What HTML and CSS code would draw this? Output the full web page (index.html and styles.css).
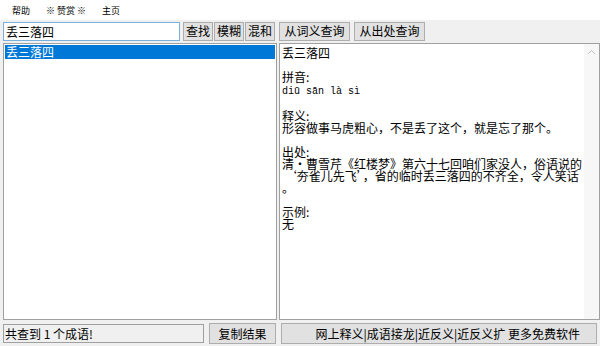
FILE: index.html
```html
<!DOCTYPE html>
<html lang="zh-CN">
<head>
    <meta charset="UTF-8">
    <title>成语词典</title>
    <link rel="stylesheet" href="styles.css">
</head>
<body>
    <div class="menu">
        <span class="menu-item">帮助</span>
        <span class="menu-item">※ 赞赏 ※</span>
        <span class="menu-item">主页</span>
    </div>

    <div class="toolbar">
        <input class="search" type="text" value="丢三落四">
        <button class="btn small">查找</button>
        <button class="btn small">模糊</button>
        <button class="btn small">混和</button>
        <button class="btn wide first">从词义查询</button>
        <button class="btn wide">从出处查询</button>
    </div>

    <div class="main">
        <div class="list">
            <div class="list-item selected">丢三落四</div>
        </div>
        <div class="detail">
            <div class="detail-text">
                <p>丢三落四</p>
                <p>拼音:<br><span class="pinyin">diū sān là sì</span></p>
                <p>释义:<br>形容做事马虎粗心，不是丢了这个，就是忘了那个。</p>
                <p class="nowrap">出处:<br>清·曹雪芹《红楼梦》第六十七回咱们家没人，俗语说的<br>&nbsp;‘夯雀儿先飞’，省的临时丢三落四的不齐全，令人笑话<br>。</p>
                <p>示例:<br>无</p>
            </div>
            <div class="scrollbar">
                <svg class="arrow" width="9" height="6" viewBox="0 0 9 6"><path d="M1 5 L4.5 1.5 L8 5" fill="none" stroke="#c2c2c2" stroke-width="1"/></svg>
            </div>
        </div>
    </div>

    <div class="footer">
        <div class="status">共查到 1 个成语!</div>
        <button class="btn copy">复制结果</button>
        <button class="btn links">网上释义|成语接龙|近反义|近反义扩 更多免费软件</button>
    </div>
</body>
</html>
```

FILE: styles.css
```css
body {
    margin: 0;
    background-color: #f0f0f0;
    font-family: "Noto Sans CJK SC", "DejaVu Sans", sans-serif;
    font-size: 12px;
    color: #000;
    width: 600px;
    height: 346px;
    overflow: hidden;
}

.menu {
    background-color: #fff;
    height: 20px;
    display: flex;
    align-items: center;
    gap: 16px;
    padding-left: 12px;
}

.menu-item {
    font-size: 9px;
}

.toolbar {
    display: flex;
    align-items: center;
    padding: 1px 3px 0 3px;
    height: 20px;
}

.search {
    width: 177px;
    height: 19px;
    box-sizing: border-box;
    border: 1px solid #7ab0dc;
    font-family: inherit;
    font-size: 12px;
    padding: 0 2px;
    margin: 0 3px 0 0;
    outline: none;
}

.btn {
    font-family: inherit;
    font-size: 12px;
    background-color: #e1e1e1;
    border: 1px solid #adadad;
    height: 19px;
    padding: 0;
    margin: 0;
    color: #000;
    line-height: 16px;
}

.small {
    width: 30px;
    margin-right: 1px;
}

.wide {
    width: 71px;
    margin-right: 4px;
}

.first {
    margin-left: 3px;
}

.main {
    display: grid;
    grid-template-columns: 274px 1fr;
    gap: 2px;
    padding: 2px 0 0 3px;
    height: 277px;
}

.list {
    background-color: #fff;
    border: 1px solid #a0a0a0;
    padding: 1px;
}

.list-item {
    height: 14px;
    line-height: 14px;
    padding-left: 1px;
}

.selected {
    background-color: #0078d7;
    color: #fff;
}

.detail {
    background-color: #fff;
    border: 1px solid #a0a0a0;
    display: flex;
    overflow: hidden;
}

.detail-text {
    flex: 1;
    min-width: 0;
    padding: 3px 0 0 2px;
    line-height: 12px;
}

.detail-text p {
    margin: 0 0 12px 0;
}

.nowrap {
    white-space: nowrap;
}

.pinyin {
    font-family: "Liberation Mono", monospace;
    font-size: 10px;
}

.scrollbar {
    width: 15px;
    flex-shrink: 0;
    background-color: #f7f7f7;
    display: flex;
    justify-content: center;
    padding-top: 5px;
    box-sizing: border-box;
}

.footer {
    display: flex;
    align-items: center;
    padding: 3px 0 0 3px;
}

.status {
    width: 201px;
    height: 19px;
    box-sizing: border-box;
    border: 1px solid #a0a0a0;
    background-color: #f0f0f0;
    line-height: 17px;
    padding-left: 1px;
}

.copy {
    width: 67px;
    height: 21px;
    margin-left: 5px;
}

.links {
    width: 316px;
    height: 21px;
    margin-left: 5px;
    text-align: right;
    padding-right: 16px;
}
```
